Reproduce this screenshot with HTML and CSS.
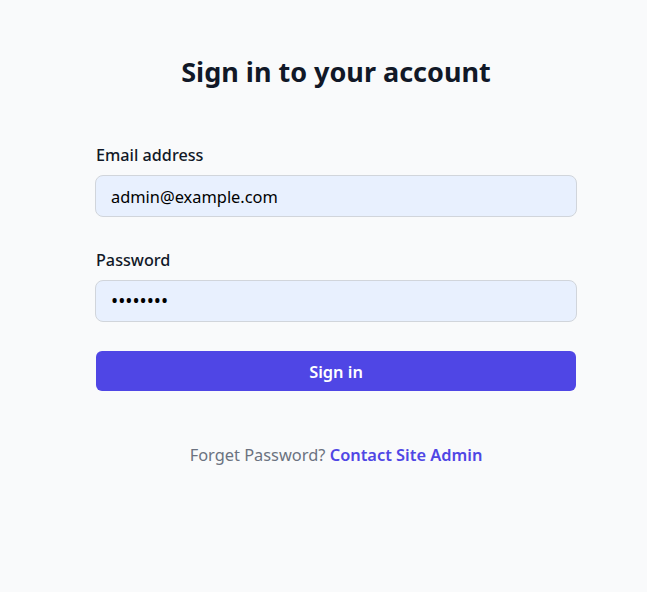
FILE: index.html
```html
<!DOCTYPE html>
<html lang="en">
<head>
<meta charset="utf-8">
<title>Sign in</title>
<link rel="stylesheet" href="styles.css">
</head>
<body>
<main class="page">
  <div class="panel">
    <h1 class="title">Sign in to your account</h1>
    <form class="form">
      <div class="field">
        <label class="label" for="email">Email address</label>
        <input class="input" id="email" type="email" value="admin@example.com">
      </div>
      <div class="field field-second">
        <label class="label" for="password">Password</label>
        <input class="input input-password" id="password" type="password" value="password">
      </div>
      <button class="button" type="button">Sign in</button>
    </form>
    <p class="footer">Forget Password? <a class="link" href="#">Contact Site Admin</a></p>
  </div>
</main>
</body>
</html>
```

FILE: styles.css
```css
html, body {
  margin: 0;
  padding: 0;
  background: #f9fafb;
  font-family: "Noto Sans", "Open Sans", sans-serif;
  color: #111827;
}
.page {
  padding: 56px 0 0 96px;
}
.panel {
  width: 480px;
}
.title {
  margin: 0;
  font-size: 27px;
  line-height: 32px;
  font-weight: 700;
  text-align: center;
  color: #111827;
}
.form {
  margin-top: 55px;
  display: flex;
  flex-direction: column;
}
.field {
  display: flex;
  flex-direction: column;
}
.field-second {
  margin-top: 31px;
}
.label {
  font-size: 16.2px;
  line-height: 24px;
  font-weight: 500;
  color: #111827;
  margin-bottom: 8px;
}
.input {
  box-sizing: border-box;
  width: 482px;
  margin-left: -1px;
  height: 42px;
  border: 1px solid #d1d5db;
  border-radius: 8px;
  background: #e8f0fe;
  padding: 0 15px;
  font-family: inherit;
  font-size: 16.4px;
  color: #000;
  outline: none;
}
.input-password {
  font-size: 19px;
  letter-spacing: 0;
}
.button {
  margin-top: 29px;
  height: 40px;
  border: none;
  border-radius: 6px;
  background: #4f46e5;
  color: #fff;
  font-family: inherit;
  font-size: 16.4px;
  font-weight: 600;
  cursor: pointer;
}
.footer {
  margin: 52px 0 0;
  text-align: center;
  font-size: 16.4px;
  line-height: 24px;
  color: #6b7280;
}
.link {
  color: #4f46e5;
  font-weight: 600;
  text-decoration: none;
}
```
